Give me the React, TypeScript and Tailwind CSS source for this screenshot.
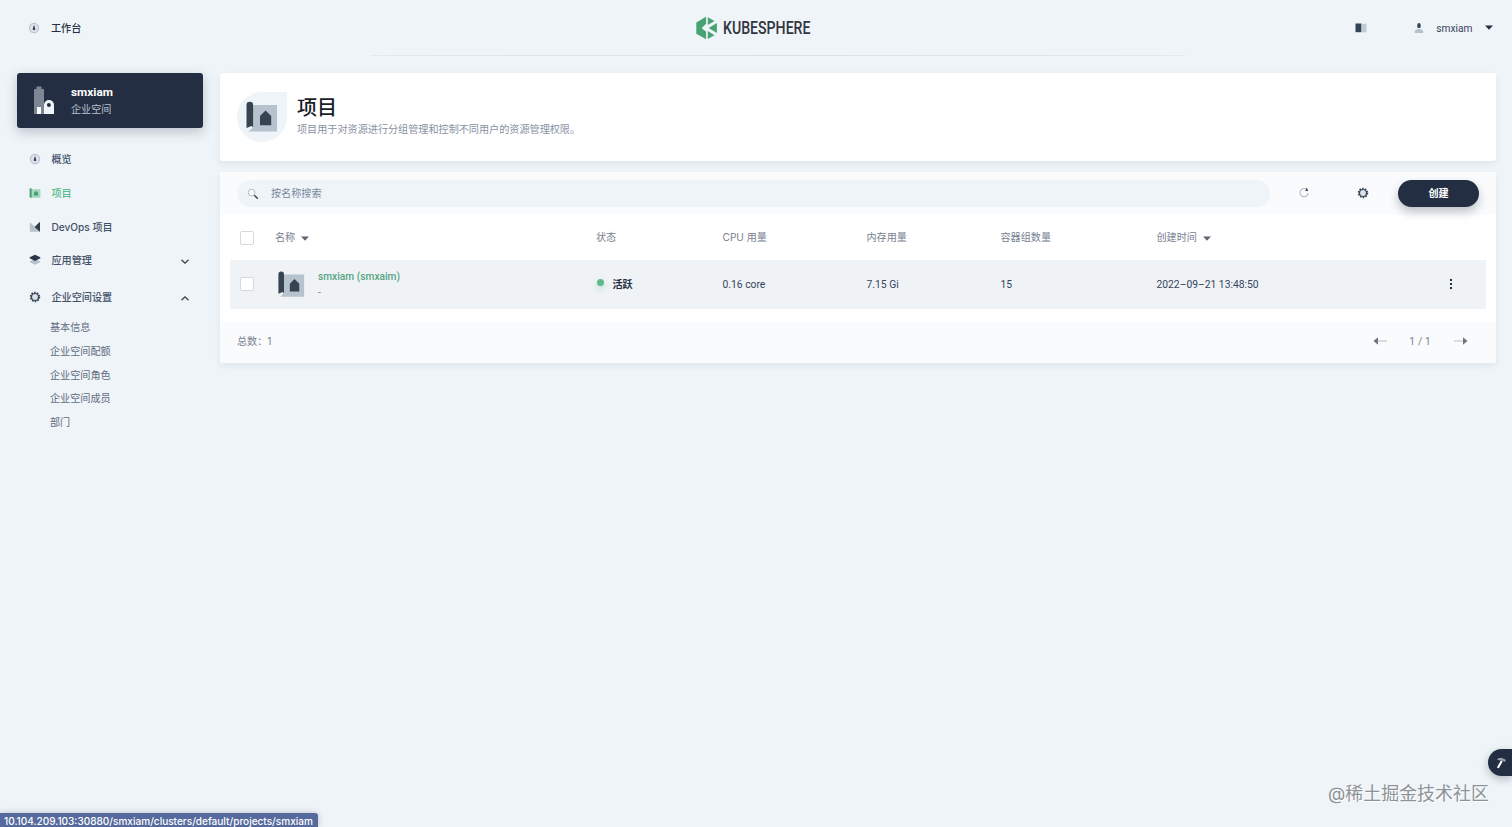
import React from "react";

type IconProps = { className?: string };

const GaugeIcon = ({ className = "" }: IconProps) => (
  <svg viewBox="0 0 12 12" className={`size-3 shrink-0 ${className}`}>
    <circle cx="6" cy="6" r="5.2" fill="#bcc4d0" />
    <circle cx="6" cy="6" r="3.9" fill="#dfe4ec" />
    <path d="M6 2.8 7.2 6.4A1.3 1.3 0 1 1 4.8 6.4Z" fill="#36435c" />
  </svg>
);

const ProjectIcon = ({ className = "" }: IconProps) => (
  <svg viewBox="0 0 12 12" className={`size-3 shrink-0 ${className}`}>
    <rect x="2" y="2.2" width="9.4" height="8.6" fill="#a2d8bb" />
    <path d="M.6 1.4h2v9.2H.6z" fill="#479e74" />
    <path d="M7 4 9 5.8V8.6H5V5.8Z" fill="#479e74" />
  </svg>
);

const DevOpsIcon = () => (
  <svg viewBox="0 0 12 12" className="size-3 shrink-0">
    <path d="M.8 1.2 6 6l4 4.8H.8z" fill="#b9c1cd" />
    <path d="M11 .8v10.200L5.500 6z" fill="#303b4c" />
  </svg>
);

const LayersIcon = () => (
  <svg viewBox="0 0 12 12" className="size-3 shrink-0">
    <path d="M1 7.2 6 5l5 2.2v1L6 10.8 1 8.200z" fill="#b6bfcc" />
    <path d="M6 .8 11.300 3.300v1L6 7 .7 4.300v-1z" fill="#2b3448" />
  </svg>
);

const GearIcon = ({ className = "" }: IconProps) => (
  <svg viewBox="0 0 12 12" className={`size-3 shrink-0 ${className}`}>
    <circle cx="6" cy="6" r="4.600" fill="none" stroke="#324050" strokeWidth="1.300" strokeDasharray="1.600 1.290" />
    <circle cx="6" cy="6" r="3.500" fill="#dce2e9" stroke="#324050" strokeWidth="1.200" />
  </svg>
);

const Chevron = ({ up = false }: { up?: boolean }) => (
  <svg viewBox="0 0 10 6" className="ml-auto h-1.5 w-2.5 shrink-0 translate-y-[1.5px]">
    <path d={up ? "M1.500 4.800 5 1.300 8.500 4.800" : "M1.500 1.200 5 4.700 8.500 1.200"} fill="none" stroke="#36404e" strokeWidth="1.300" />
  </svg>
);

const Caret = ({ className = "" }: IconProps) => (
  <svg viewBox="0 0 8 5" className={`h-[5px] w-2 shrink-0 ${className}`}>
    <path d="M0 .4h8L4 4.800z" fill="currentColor" />
  </svg>
);

const MapIcon = ({ className = "" }: IconProps) => (
  <svg viewBox="0 0 32 32" className={`shrink-0 ${className}`}>
    <path d="M5 4h26v26.500H1.500C4 30.500 5 28 7 26z" fill="#b6c2cd" />
    <path d="M.5 4a3.300 3.300 0 0 1 6.600 0v22.300L5.500 25 .5 27z" fill="#364351" />
    <path d="m19.500 9.500 5.700 5.500v9.300H14V15z" fill="#364351" />
  </svg>
);

const Checkbox = () => (
  <span className="block size-3.5 shrink-0 rounded-[2px] border border-[#d3d9e1] bg-white" />
);

const columns =
  "grid grid-cols-[45px_321px_126.500px_144px_134px_156px_1fr_70px] items-center";

function NavItem({ icon, label, active, trailing, tall }: {
  icon: React.ReactNode;
  label: string;
  active?: boolean;
  trailing?: React.ReactNode;
  tall?: boolean;
}) {
  return (
    <li className={`flex items-center pr-[13px] pl-3 ${tall ? "h-[40px]" : "h-[33.700px]"} ${active ? "text-[#55bc8a]" : "text-[#445067]"}`}>
      {icon}
      <span className="ml-[10.500px] pt-px font-medium">{label}</span>
      {trailing}
    </li>
  );
}

function Header() {
  return (
    <header className="relative grid h-14 grid-cols-3 items-center">
      <div className="flex items-center gap-[11px] pl-7 font-medium text-[#242e42]">
        <GaugeIcon />
        <span className="pt-px">工作台</span>
      </div>
      <div className="flex items-center justify-center pr-[2px]">
        <svg viewBox="0 0 120 24" className="h-6 w-[120px] overflow-visible">
          <path d="M1.300 6.400 11.100.7V7.700L6.600 12l4.500 3.800v7.500L1.300 17.800z" fill="#48a374" />
          <path d="M12.800 1.300 19.500 5 12.800 9zM13.700 12.100l8.200-5v10zM12.800 15.100l6.700 4.100L12.800 22.900z" fill="#48a374" />
          <text x="28" y="18.300" textLength="87.500" lengthAdjust="spacingAndGlyphs" fontFamily="Roboto" fontWeight="500" fontSize="17.500" fill="#303540">KUBESPHERE</text>
        </svg>
      </div>
      <div className="flex items-center justify-end pr-[19px] text-[#36435c]">
        <svg viewBox="0 0 12 10" className="mr-[47px] h-2.5 w-3">
          <path d="M.5.5h6v8.700h-6z" fill="#324558" />
          <path d="M6.500 1.300 11.500.5v8.700h-5z" fill="#c2cbd5" />
        </svg>
        <svg viewBox="0 0 10 12" className="mr-3 h-3 w-2.5">
          <path d="M.8 11V9.500C.8 8 2.500 7 5 7s4.200 1 4.200 2.500V11z" fill="#b6bfcc" />
          <path d="M3.300 2.700a1.700 1.700 0 0 1 3.400 0V4.500a1.700 1.700 0 0 1-3.400 0z" fill="#324558" />
        </svg>
        <span className="pt-px font-[family-name:Roboto] text-[10.200px]">smxiam</span>
        <Caret className="ml-[12.500px] text-[#242e42]" />
      </div>
      <div className="absolute bottom-0 left-[370px] h-px w-[815px] bg-linear-to-r from-[#e4e9ee] via-[#d9dfe5] to-[#e4e9ee]" />
    </header>
  );
}

function Sidebar() {
  return (
    <aside className="w-[220px] shrink-0 pt-[17px] pr-[17px] pl-[17px]">
      <div className="flex h-[54.500px] items-center rounded-[3px] bg-[#242e42] pl-4 shadow-[0_4px_12px_rgba(36,46,66,0.25)]">
        <svg viewBox="0 0 24 30" className="h-[30px] w-6">
          <path d="M1 4h2.500V1.500h5V4H11v25H1z" fill="#7e8696" />
          <path d="M4 22h4v7H4z" fill="#fff" />
          <path d="M11 29V20a5 5 0 0 1 10 0v9z" fill="#eff4f9" />
          <circle cx="15.900" cy="20" r="2" fill="#242e42" />
        </svg>
        <div className="ml-3.5 pt-px">
          <div className="font-[family-name:Roboto] text-[11.800px] leading-[17px] font-bold text-white">smxiam</div>
          <div className="leading-[17px] text-[#b9c1cf]">企业空间</div>
        </div>
      </div>
      <ul className="pt-[15px]">
        <NavItem icon={<GaugeIcon />} label="概览" />
        <NavItem icon={<ProjectIcon />} label="项目" active />
        <NavItem icon={<DevOpsIcon />} label="DevOps 项目" />
        <NavItem icon={<LayersIcon />} label="应用管理" trailing={<Chevron />} />
        <NavItem icon={<GearIcon />} label="企业空间设置" trailing={<Chevron up />} tall />
      </ul>
      <ul className="-mt-px pl-[33px] leading-[23.700px] text-[#5f6b80]">
        {["基本信息", "企业空间配额", "企业空间角色", "企业空间成员", "部门"].map((t) => (
          <li key={t}>{t}</li>
        ))}
      </ul>
    </aside>
  );
}

function Banner() {
  return (
    <section className="flex h-[88px] items-center rounded-[3px] bg-white pl-[17px] shadow-[0_3px_7px_rgba(36,46,66,0.08)]">
      <div className="flex size-[50px] items-center justify-center rounded-full rounded-tr-none bg-[#eff4f9]">
        <MapIcon className="size-8" />
      </div>
      <div className="ml-2.5 pb-[1px]">
        <h1 className="text-[20px] leading-[26px] font-medium text-[#181d28]">项目</h1>
        <p className="leading-[17px] text-[#8791a3]">项目用于对资源进行分组管理和控制不同用户的资源管理权限。</p>
      </div>
    </section>
  );
}

function ProjectTable() {
  return (
    <section className="mt-[11px] rounded-[3px] bg-white shadow-[0_3px_7px_rgba(36,46,66,0.07)]">
      <div className="flex h-[43px] items-center bg-[#f9fbfd] pr-[17px] pl-[17px]">
        <div className="flex h-[27px] w-[1033px] items-center rounded-full bg-[#eff4f8] pl-[10px] text-[#79879c]">
          <svg viewBox="0 0 12 12" className="size-3">
            <circle cx="4.600" cy="4.600" r="3.400" fill="#f5f8fb" stroke="#aeb7c3" strokeWidth=".9" />
            <path d="m7.300 7.300 3.500 3.500" stroke="#36435c" strokeWidth="1.400" />
          </svg>
          <span className="ml-3">按名称搜索</span>
        </div>
        <svg viewBox="0 0 12 12" className="mb-px ml-7 size-3">
          <path d="M8.300 2.200a4.100 4.100 0 1 0 1.900 3.900" fill="none" stroke="#b3bbc6" strokeWidth="1.100" />
          <path d="M7.300 3.900 8.800.4l1.400 3.700z" fill="#36435c" />
        </svg>
        <GearIcon className="mb-px ml-[47px]" />
        <button className="ml-auto h-[27px] w-[81px] rounded-full bg-[#242e42] font-bold text-white shadow-[0_5px_10px_rgba(36,46,66,0.28)]">创建</button>
      </div>
      <div className={`${columns} h-[45px] px-2.5 text-[#79818f]`}>
        <div className="pl-2.5"><Checkbox /></div>
        <div className="flex items-center gap-1.5">名称 <Caret className="translate-y-px text-[#5f6671]" /></div>
        <div>状态</div>
        <div>CPU 用量</div>
        <div>内存用量</div>
        <div>容器组数量</div>
        <div className="flex items-center gap-1.5">创建时间 <Caret className="translate-y-px text-[#5f6671]" /></div>
      </div>
      <div className="px-2.5">
        <div className={`${columns} h-[48.500px] bg-[#eff3f6] font-[Roboto,'Noto_Sans_CJK_SC',sans-serif] text-[10.300px] text-[#36435c]`}>
          <div className="pl-2.5"><Checkbox /></div>
          <div className="flex items-center">
            <MapIcon className="ml-[3px] size-[27px]" />
            <div className="ml-[13px] pt-px">
              <div className="text-[10.200px] leading-4 font-medium text-[#55a582]">smxiam (smxaim)</div>
              <div className="leading-4 text-[#79879c]">-</div>
            </div>
          </div>
          <div className="flex items-center text-[10.125px] font-bold text-[#242e42]">
            <span className="mr-[8.500px] mb-[3px] ml-px size-[7px] rounded-full bg-[#5fb98c] shadow-[0_3px_6px_rgba(85,188,138,0.35)]" />
            活跃
          </div>
          <div className="pt-px">0.16 core</div>
          <div className="pt-px">7.15 Gi</div>
          <div className="pt-px">15</div>
          <div className="pt-px">2022–09–21 13:48:50</div>
          <div className="flex justify-center">
            <svg viewBox="0 0 4 12" className="h-3 w-1" fill="#242e42">
              <rect x="1" y="1" width="2" height="2" />
              <rect x="1" y="5" width="2" height="2" />
              <rect x="1" y="9" width="2" height="2" />
            </svg>
          </div>
        </div>
      </div>
      <div className="mt-[12.500px] flex h-[42px] items-center rounded-b-[3px] bg-[#f9fbfd] pr-[28.500px] pl-[17px] text-[#79818f]">
        <span>总数：1</span>
        <svg viewBox="0 0 15 8" className="mb-[2px] ml-auto h-2 w-[15px]">
          <path d="M5 3h9v2H5z" fill="#d8dce2" /><path d="M.5 4 5 .3v7.400z" fill="#6f7580" />
        </svg>
        <span className="mr-[21.500px] ml-[21.500px] font-[family-name:Roboto] text-[10.200px] tracking-[0.2px]">1 / 1</span>
        <svg viewBox="0 0 15 8" className="mb-[2px] h-2 w-[15px]">
          <path d="M1 3h9v2H1z" fill="#d8dce2" /><path d="M14.500 4 10 .3v7.400z" fill="#6f7580" />
        </svg>
      </div>
    </section>
  );
}

export default function App() {
  return (
    <div className="relative h-[827px] w-[1512px] overflow-hidden bg-[#eff4f8] font-[Inter,'Noto_Sans_CJK_SC',sans-serif] text-[10.125px]">
      <Header />
      <div className="flex">
        <Sidebar />
        <main className="w-[1276px] pt-[17px]">
          <Banner />
          <ProjectTable />
        </main>
      </div>
      <div className="absolute top-[749px] right-0 flex h-[27px] w-6 items-center justify-center rounded-l-full bg-[#242e42] shadow-[0_3px_8px_rgba(36,46,66,0.3)]">
        <svg viewBox="0 0 12 12" className="ml-0.5 size-3">
          <path d="M2.300 2.300C4 .6 7 .3 10.800 3L9.900 5 7.800 3.800 2.500 3z" fill="#9aa3b2" />
          <path d="M5.900 3.500 7.800 4.300 3.800 11.300 1.900 10.500z" fill="#fff" />
        </svg>
      </div>
      <div className="absolute top-[780px] left-[1328px] text-[17.950px] leading-7 whitespace-nowrap text-[#8d9296] [text-shadow:1px_1px_0_#fff]">@稀土掘金技术社区</div>
      <div className="absolute bottom-0 left-0 h-[14.500px] w-[317.500px] rounded-tr-[3px] bg-[#566a9e] pl-1 text-[10.050px] leading-[17px] font-medium whitespace-nowrap text-white shadow-[0_0_6px_rgba(36,46,66,0.25)]">
        10.104.209.103:30880/smxiam/clusters/default/projects/smxiam
      </div>
    </div>
  );
}
